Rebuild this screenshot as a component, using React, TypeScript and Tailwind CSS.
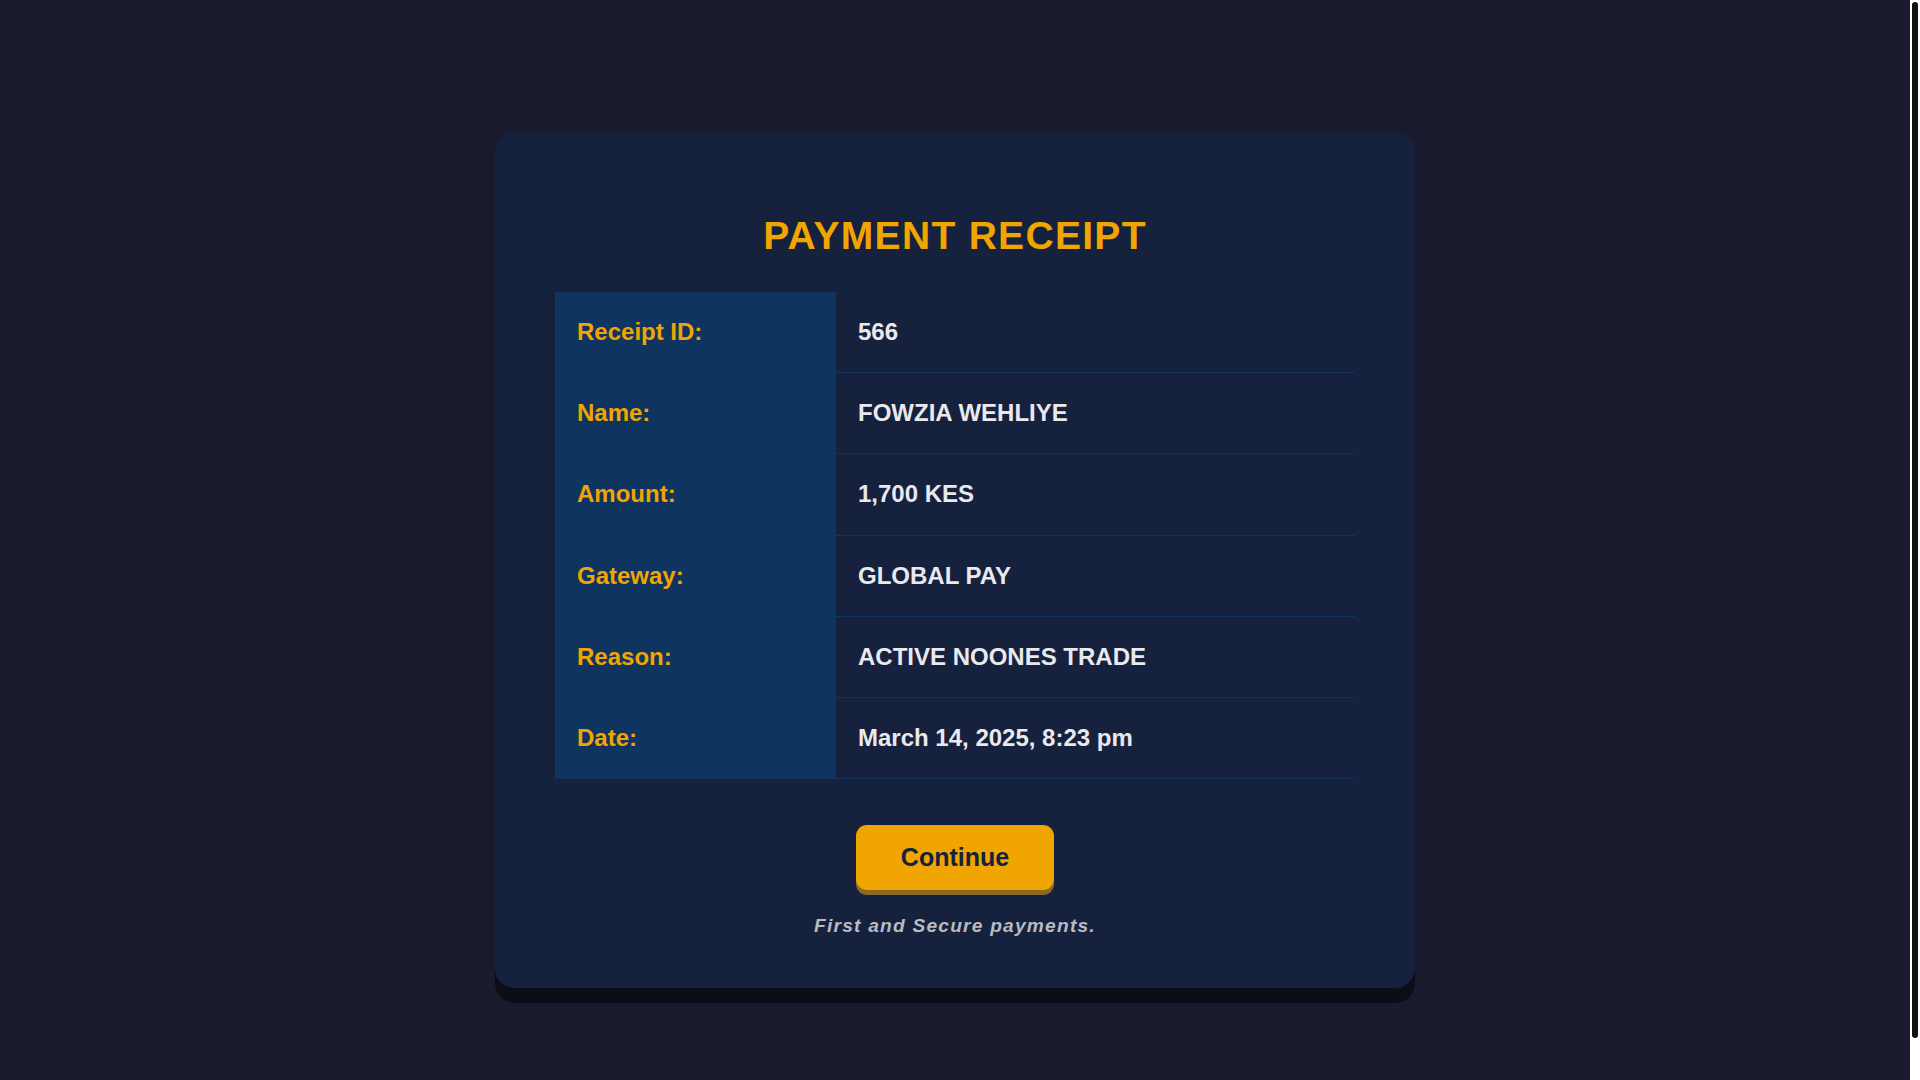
const rows = [
    { label: "Receipt ID:", value: "566" },
    { label: "Name:", value: "FOWZIA WEHLIYE" },
    { label: "Amount:", value: "1,700 KES" },
    { label: "Gateway:", value: "GLOBAL PAY" },
    { label: "Reason:", value: "ACTIVE NOONES TRADE" },
    { label: "Date:", value: "March 14, 2025, 8:23 pm" },
];

export default function App() {
    return (
        <div className="flex h-screen bg-[#1a1a2e] font-['Liberation_Sans',Arial,sans-serif]">
            <main className="flex-1 overflow-y-auto">
                <div className="pt-[132px] pb-[137px]">
                    <div className="mx-auto w-[920px] rounded-[20px] bg-[#16213e] px-[60px] pt-[81px] pb-[51px] shadow-[0_15px_0_#0d0d17]">
                        <h1 className="text-center text-[39px] font-bold leading-[45px] tracking-[1.3px] text-[#f0a500]">
                            PAYMENT RECEIPT
                        </h1>

                        <div className="mt-[34px] grid grid-cols-[281px_1fr]">
                            {rows.map((row) => (
                                <div key={row.label} className="contents">
                                    <div className="border-b border-[#0f3460] bg-[#0f3460] px-[22px] py-5 text-[24px] font-bold leading-[40.2px] text-[#f0a500]">
                                        {row.label}
                                    </div>
                                    <div className="border-b border-[#0f3460] px-[22px] py-5 text-[24px] font-bold leading-[40.2px] text-[#e9e9ee]">
                                        {row.value}
                                    </div>
                                </div>
                            ))}
                        </div>

                        <div className="mt-[46px] flex justify-center">
                            <button className="rounded-[11px] bg-[#f0a500] px-[45px] py-[19px] text-[25px] font-bold leading-[27px] text-[#16213e] shadow-[0_5px_0_#8b6a22]">
                                Continue
                            </button>
                        </div>

                        <p className="mt-[25px] text-center text-[19.2px] font-bold italic leading-[22px] tracking-[1.2px] text-[#b9bbc3]">
                            First and Secure payments.
                        </p>
                    </div>
                </div>
            </main>

            {/* scrollbar as it shows in the capture */}
            <div className="w-[10px] shrink-0 bg-white p-[2px]">
                <div className="h-[1036px] rounded-[3px] bg-[#111111]" />
            </div>
        </div>
    );
}
